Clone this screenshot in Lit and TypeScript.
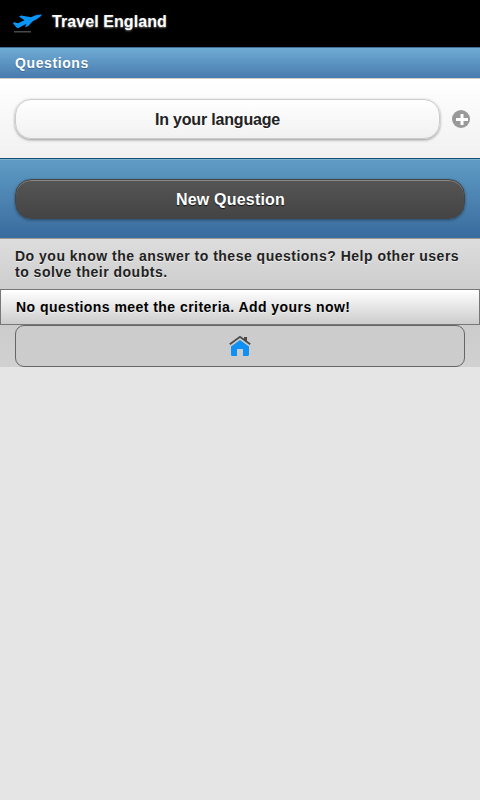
import { LitElement, html, css } from "lit";
import { customElement } from "lit/decorators.js";

@customElement("app-root")
class AppRoot extends LitElement {
  static styles = css`
    :host {
      display: block;
      min-height: 100vh;
      background: #e5e5e5;
      font: bold 14px/16px "Liberation Sans", Arial, sans-serif;
      color: #222;
    }
    * { box-sizing: border-box; }
    .header {
      height: 47px;
      background: #000;
      color: #fff;
      display: flex;
      align-items: flex-start;
      padding: 12px 0 0 12px;
      font-size: 16px;
      line-height: 20px;
    }
    .plane { width: 32px; height: 22px; flex: none; }
    .title { margin-left: 8px; text-shadow: 0 1px 2px #777; letter-spacing: 0.08px; }
    .bar {
      height: 32px;
      padding: 7px 15px;
      color: #fff;
      border-top: 1px solid #456f9a;
      border-bottom: 1px solid #ccc;
      background: linear-gradient(#6facd5, #497bae);
      text-shadow: 0 1px 1px #3e6790;
      letter-spacing: 0.6px;
    }
    .filter {
      height: 79px;
      padding: 20px 10px 0 15px;
      display: flex;
      background: linear-gradient(#fff, #f1f1f1);
    }
    .button {
      height: 40px;
      border-radius: 16px;
      display: flex;
      justify-content: center;
      align-items: center;
      font-size: 16px;
    }
    .light {
      width: 425px;
      padding: 2px 20px 0 0;
      border: 1px solid #ccc;
      background: linear-gradient(#fff, #f1f1f1);
      text-shadow: 0 1px 1px #fff;
      letter-spacing: -0.18px;
      box-shadow: 0 1px 3px rgba(0, 0, 0, 0.4);
    }
    .plus { width: 18px; height: 18px; margin: 11px 0 0 12px; }
    .action {
      height: 80px;
      padding: 20px 15px 0;
      border-top: 1px solid #145072;
      background: linear-gradient(#5f9cc5, #396b9e);
      box-shadow: inset 0 1px #7db3cf;
    }
    .dark {
      letter-spacing: 0.2px;
      padding: 2px 19px 0 0;
      color: #fff;
      border: 1px solid #444;
      background: linear-gradient(#555, #444);
      text-shadow: 0 1px 1px #111;
      box-shadow: inset 0 1px #888, 0 1px 3px rgba(0, 0, 0, 0.4);
    }
    .body {
      height: 129px;
      border-top: 1px solid #999;
      background: linear-gradient(#ddd, #c9c9c9 50%, #d1d1d1);
      text-shadow: 0 1px 0 #eee;
      letter-spacing: 0.5px;
    }
    .intro { height: 50px; padding: 9px 15px 0; }
    .empty {
      height: 36px;
      padding: 9px 15px;
      border: 1px solid #777;
      color: #000;
      background: linear-gradient(#fff, #ccc);
      letter-spacing: 0.45px;
    }
    .home {
      height: 42px;
      margin: 0 15px;
      border: 1px solid #666;
      border-radius: 9px;
      background: #ccc;
      display: flex;
      justify-content: center;
      align-items: center;
    }
  `;

  render() {
    return html`
      <div class="header">
        <svg class="plane" viewBox="0 0 32 22">
          <path fill="#0a95f8" d="M.8 11L2.500 10.200 6 11.300 12.500 8.200 7 4.400 9 3.400 19 5.200C22 3.400 26 2.200 30 2.400 28.500 5 25 7.200 21 9L16 14.200 13 15.200 14.500 11.800 6 16.300 4.500 15.500z" />
          <path fill="#484848" d="M2 19h17v1.500H2z" />
        </svg>
        <div class="title">Travel England</div>
      </div>
      <div class="bar">Questions</div>
      <div class="filter">
        <div class="button light">In your language</div>
        <svg class="plus" viewBox="0 0 18 18">
          <circle cx="9" cy="9" r="9" fill="#999" />
          <path fill="#fff" d="M8.500 4h3v4h4.500v3h-4.500v4h-3v-4H4V8h4.500z" />
        </svg>
      </div>
      <div class="action"><div class="button dark">New Question</div></div>
      <div class="body">
        <div class="intro">Do you know the answer to these questions? Help other users to solve their doubts.</div>
        <div class="empty">No questions meet the criteria. Add yours now!</div>
        <div class="home">
          <svg width="22" height="22" viewBox="0 0 22 22">
            <path fill="#1090f2" d="M2 11.500L11 5l9 6.500V19.500q0 1.500-1.500 1.500H14v-7H8v7H3.500q-1.500 0-1.500-1.500z" />
            <path fill="none" stroke="#4b4b4b" stroke-width="1.800" d="M.8 9.200L11 1.800l10.200 7.400" />
            <path fill="#4b4b4b" d="M15 2h3v5l-3-2z" />
          </svg>
        </div>
      </div>
    `;
  }
}
